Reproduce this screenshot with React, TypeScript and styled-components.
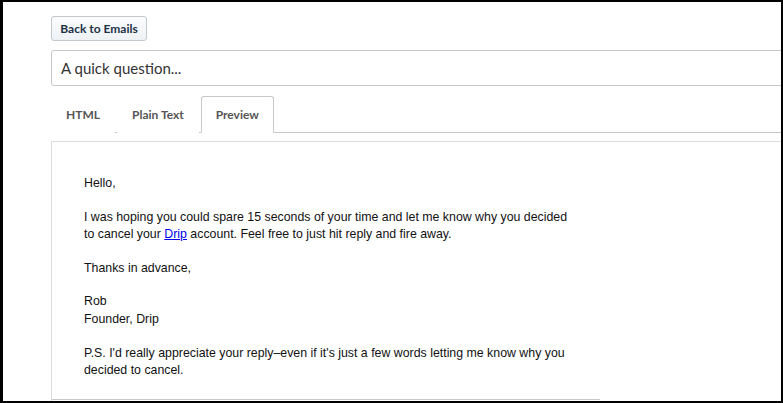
import React, { useState } from 'react';
import styled, { createGlobalStyle } from 'styled-components';

const GlobalStyle = createGlobalStyle`
  html, body {
    margin: 0;
    padding: 0;
    background: #fff;
  }
  * {
    box-sizing: border-box;
  }
`;

const Frame = styled.div`
  width: 783px;
  height: 403px;
  border-style: solid;
  border-color: #000;
  border-width: 2px 2px 2px 3px;
  overflow: hidden;
  background: #fff;
`;

const Page = styled.div`
  padding: 14px 0 0 48px;
  width: 820px;
  display: flex;
  flex-direction: column;
  align-items: flex-start;
`;

const BackButton = styled.button`
  height: 25px;
  width: 96px;
  padding: 0;
  border: 1px solid #c3c8cc;
  border-radius: 3px;
  background: linear-gradient(#fbfcfd, #eef2f5);
  color: #1e3246;
  font-family: Lato, 'Open Sans', sans-serif;
  font-weight: 700;
  font-size: 12px;
  cursor: pointer;
`;

const SubjectInput = styled.input`
  margin-top: 9px;
  width: 100%;
  height: 36px;
  padding: 0 9px;
  border: 1px solid #c6c6c6;
  border-radius: 3px;
  font-family: Lato, 'Open Sans', sans-serif;
  font-size: 15px;
  color: #333;
  outline: none;
`;

const TabBar = styled.div`
  margin-top: 10px;
  width: 100%;
  display: flex;
  gap: 2px;
  border-bottom: 1px solid #c8c8c8;
`;

const Tab = styled.button<{ $active?: boolean }>`
  height: 37px;
  margin-bottom: -1px;
  padding: 0 14px;
  border: 1px solid ${(p) => (p.$active ? '#c8c8c8' : 'transparent')};
  border-bottom-color: ${(p) => (p.$active ? '#fff' : 'transparent')};
  border-radius: 3px 3px 0 0;
  background: #fff;
  color: #555;
  font-family: Lato, 'Open Sans', sans-serif;
  font-weight: 700;
  font-size: 12px;
  cursor: pointer;
`;

const PreviewPanel = styled.div`
  margin-top: 8px;
  width: 100%;
  height: 300px;
  border: 1px solid #dcdcdc;
  padding: 33px 0 0 32px;
  font-family: 'Liberation Sans', Arial, sans-serif;
  font-size: 12.35px;
  line-height: 17.6px;
  color: #111;
`;

const EmailBody = styled.div`
  width: 490px;
  p {
    margin: 0 0 16px;
  }
  a {
    color: #0000ee;
    text-decoration: underline;
  }
`;

const BodyEnd = styled.div`
  margin: 19px 0 0 -32px;
  width: 548px;
  border-top: 1px solid #c8c8c8;
`;

const tabs = ['HTML', 'Plain Text', 'Preview'];

const App: React.FC = () => {
  const [active, setActive] = useState('Preview');
  const [subject, setSubject] = useState('A quick question...');

  return (
    <>
      <GlobalStyle />
      <Frame>
        <Page>
          <BackButton>Back to Emails</BackButton>
          <SubjectInput value={subject} onChange={(e) => setSubject(e.target.value)} />
          <TabBar>
            {tabs.map((t) => (
              <Tab key={t} $active={t === active} onClick={() => setActive(t)}>
                {t}
              </Tab>
            ))}
          </TabBar>
          <PreviewPanel>
            <EmailBody>
              <p>Hello,</p>
              <p>
                I was hoping you could spare 15 seconds of your time and let me know why you decided
                to cancel your <a href="#">Drip</a> account. Feel free to just hit reply and fire away.
              </p>
              <p>Thanks in advance,</p>
              <p>
                Rob
                <br />
                Founder, Drip
              </p>
              <p style={{ marginBottom: 0 }}>
                P.S. I'd really appreciate your reply–even if it's just a few words letting me know why you
                decided to cancel.
              </p>
            </EmailBody>
            <BodyEnd />
          </PreviewPanel>
        </Page>
      </Frame>
    </>
  );
};

export default App;
